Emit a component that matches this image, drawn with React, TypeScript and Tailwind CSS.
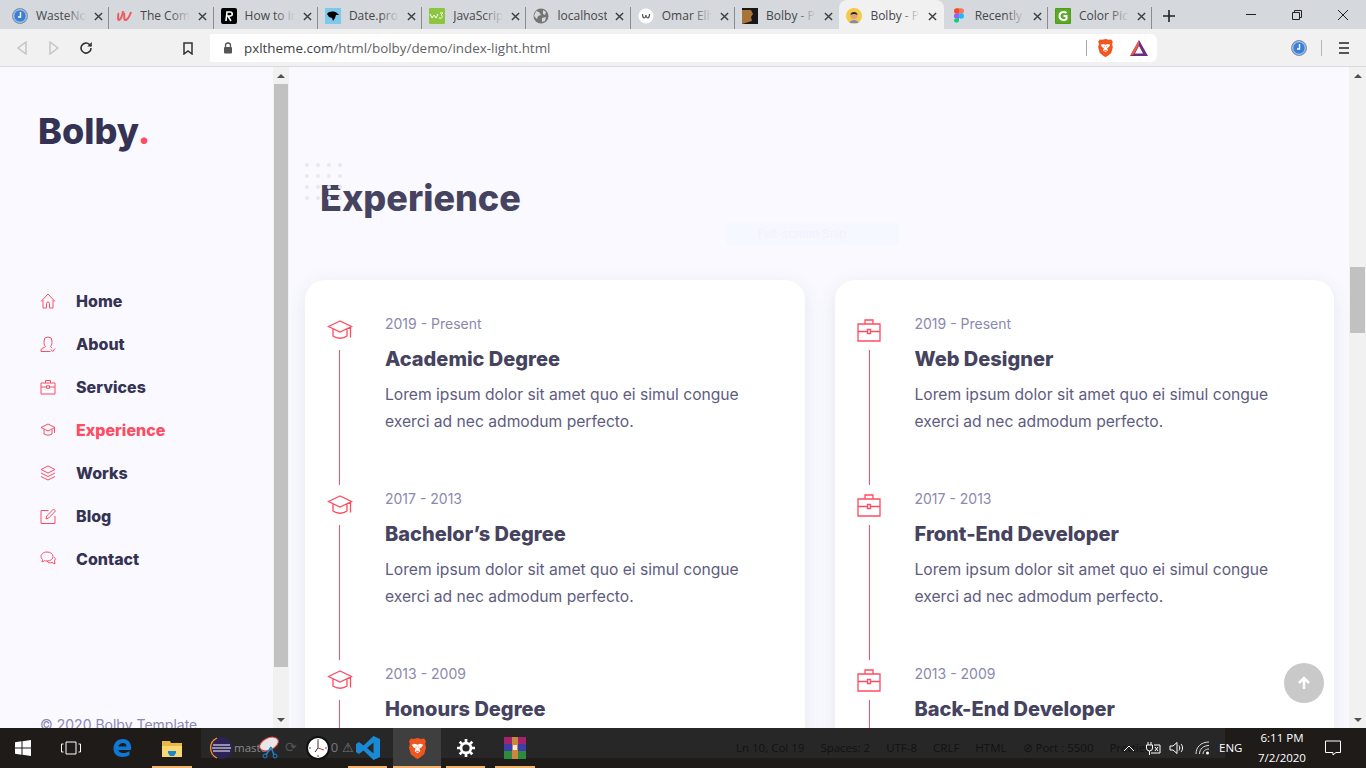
import React from "react";

const sans = "font-['Inter','Liberation_Sans',sans-serif]";
const ui = "font-['Open_Sans','Liberation_Sans',sans-serif]";

function Fav({ k }: { k: string }) {
  const c = "w-4 h-4 shrink-0";
  switch (k) {
    case "clock":
      return (
        <svg viewBox="0 0 16 16" className={c}>
          <circle cx="8" cy="8" r="7.500" fill="#3b7fd6" stroke="#8a93a0" />
          <circle cx="8" cy="8" r="6.300" fill="none" stroke="#fff" strokeWidth=".7" />
          <path d="M8.500 4v5H6" stroke="#fff" strokeWidth="1.400" fill="none" />
        </svg>
      );
    case "u":
      return (
        <svg viewBox="0 0 16 16" className={c}>
          <path d="M2 5c1 1-1 7 1 7s4-7 4-9M8 5c1 1-1 8 2 7 2-1 4-5 5-8" stroke="#ef5a5f" strokeWidth="2" fill="none" />
        </svg>
      );
    case "r":
      return (
        <svg viewBox="0 0 16 16" className={c}>
          <rect width="16" height="16" rx="2" fill="#000" />
          <path d="M5 13l1-9h3c3 0 3 4 0 4H7l3 5" stroke="#fff" strokeWidth="1.600" fill="none" />
        </svg>
      );
    case "bird":
      return (
        <svg viewBox="0 0 16 16" className={c}>
          <rect width="16" height="16" fill="#7ec8ec" />
          <path d="M2 6c2-3 7-3 10-1l2 2-3 0-1 3-2 3-1-3-3-1z" fill="#000" />
        </svg>
      );
    case "w3":
      return (
        <svg viewBox="0 0 16 16" className={c}>
          <rect width="16" height="16" rx="1" fill="#8cc63f" />
          <path d="M1 6l2 4 2-3 2 3 2-4M11 5h3l-2 2c2 0 2 4-2 3" stroke="#fff" strokeWidth="1" fill="none" />
        </svg>
      );
    case "globe":
      return (
        <svg viewBox="0 0 16 16" className={c}>
          <circle cx="8" cy="8" r="7.500" fill="#757575" />
          <path d="M3 3l3 1 2 3-3 1-1 3-3-3zM10 2l3 2-1 3-2-1zM9 10l4-1-1 4-3 1z" fill="#d5d8dc" />
        </svg>
      );
    case "w":
      return (
        <svg viewBox="0 0 16 16" className={c}>
          <circle cx="8" cy="8" r="7.500" fill="#fff" />
          <path d="M4.500 6c0 5 3 5 3.500 1 .5 4 3.500 4 3.500-1" stroke="#555" strokeWidth="1.200" fill="none" />
        </svg>
      );
    case "hair":
      return (
        <svg viewBox="0 0 16 16" className={c}>
          <rect width="16" height="16" fill="#171717" />
          <path d="M0 2h9l2 4-2 3 1 4-10 3z" fill="#a8743a" />
        </svg>
      );
    case "face":
      return (
        <svg viewBox="0 0 16 16" className={c}>
          <circle cx="8" cy="8" r="8" fill="#f5c94a" />
          <circle cx="8" cy="7.500" r="3.500" fill="#e0a37c" />
          <path d="M4.500 7c0-4 7-4 7 0-2-1.500-5-1.500-7 0z" fill="#26262e" />
          <path d="M3.500 15c1-4 8-4 9 0z" fill="#7b88c9" />
        </svg>
      );
    case "figma":
      return (
        <svg viewBox="0 0 16 16" className={c}>
          <path d="M3 3a2.700 2.700 0 012.700-2.700H8v5.400H5.700A2.700 2.700 0 013 3z" fill="#f24e1e" />
          <path d="M8 .3h2.300a2.700 2.700 0 010 5.400H8z" fill="#ff7262" />
          <path d="M3 8a2.700 2.700 0 012.700-2.700H8v5.400H5.700A2.700 2.700 0 013 8z" fill="#a259ff" />
          <circle cx="10.300" cy="8" r="2.700" fill="#1abcfe" />
          <path d="M3 13a2.700 2.700 0 012.700-2.700H8V13a2.700 2.700 0 01-5 0z" fill="#0acf83" />
        </svg>
      );
    default:
      return (
        <svg viewBox="0 0 16 16" className={c}>
          <rect width="16" height="16" rx="1" fill="#4f9a1f" />
          <rect x="1" y="1" width="14" height="14" fill="#5aa925" />
          <path d="M11.500 5C9 3 4.500 4 4.500 8s5 5 7 3V8H8.500" stroke="#fff" strokeWidth="2" fill="none" />
        </svg>
      );
  }
}

const tabs = [
  ["clock", "WasteNoTime"],
  ["u", "The Complete"],
  ["r", "How to install"],
  ["bird", "Date.prototype"],
  ["w3", "JavaScript Date"],
  ["globe", "localhost"],
  ["w", "Omar Elhawary"],
  ["hair", "Bolby - Portfolio"],
  ["face", "Bolby - Portfolio"],
  ["figma", "Recently viewed"],
  ["g", "Color Picker"],
];

function Tab({ k, t, active, sep }: { k: string; t: string; active: boolean; sep: boolean }) {
  return (
    <div className={`relative flex items-center w-[104.300px] h-[29px] pl-[7px] pr-[5px] pt-[3px] shrink-0 ${active ? "bg-[#f1f1f1] rounded-t-lg" : ""}`}>
      <Fav k={k} />
      <div className="relative ml-[8px] w-[50px] overflow-hidden whitespace-nowrap text-[12px] text-[#45474a]">
        {t}
        {t !== "localhost" && (
          <span className={`absolute right-0 top-0 bottom-0 w-5 bg-linear-to-r from-transparent ${active ? "to-[#f1f1f1]" : "to-[#d5d8dc]"}`} />
        )}
      </div>
      <svg viewBox="0 0 10 10" className="w-[9px] h-[9px] ml-[8px] shrink-0">
        <path d="M1 1l8 8M9 1l-8 8" stroke="#3c3f43" strokeWidth="1.600" />
      </svg>
      {sep && <span className="absolute right-0 top-[7px] bottom-0 w-px bg-[#8a8d90]" />}
    </div>
  );
}

function BraveIcon({ cls }: { cls: string }) {
  return (
    <svg viewBox="0 0 20 22" className={cls}>
      <path d="M10 0l4 1 3-.5 2 3-1 2.500 1 4-2 7-5 4-2 1-2-1-5-4-2-7 1-4-1-2.500 2-3 3 .5z" fill="#f1561f" />
      <path d="M4 7l3-1 3 1 3-1 3 1-2 3-2 1 1 3-3 2-3-2 1-3-2-1z" fill="#fff" />
      <path d="M8 9.500h1M11 9.500h1M8.500 14h3" stroke="#f1561f" strokeWidth="1" />
    </svg>
  );
}

function TopBar() {
  return (
    <div className={`shrink-0 ${ui}`}>
      <div className="h-[29px] bg-[#d5d8dc] flex items-center pl-[5px] relative">
        {tabs.map(([k, t], i) => (
          <Tab key={i} k={k} t={t} active={i === 8} sep={i !== 7 && i !== 8} />
        ))}
        <svg viewBox="0 0 12 12" className="w-3 h-3 ml-[11px] mt-[3px] shrink-0">
          <path d="M6 0v12M0 6h12" stroke="#222" strokeWidth="1.600" />
        </svg>
        <div className="flex items-center ml-auto">
          <div className="w-[46px] flex justify-center">
            <span className="w-[10px] h-px bg-[#222]" />
          </div>
          <div className="w-[46px] flex justify-center">
            <svg viewBox="0 0 10 10" className="w-[10px] h-[10px]">
              <path d="M.5 2.500h7v7h-7zM2.500 2.500v-2h7v7h-2" stroke="#222" fill="none" />
            </svg>
          </div>
          <div className="w-[46px] flex justify-center">
            <svg viewBox="0 0 10 10" className="w-[10px] h-[10px]">
              <path d="M0 0l10 10M10 0L0 10" stroke="#222" />
            </svg>
          </div>
        </div>
      </div>
      <div className="h-[38px] pt-[1px] bg-[#f1f1f1] border-b border-[#d9d9e0] flex items-center relative">
        <svg viewBox="0 0 12 14" className="w-3 h-[14px] ml-[16px]">
          <path d="M10 1L2 7l8 6z" stroke="#c3c3c3" strokeWidth="1.400" fill="none" />
        </svg>
        <svg viewBox="0 0 12 14" className="w-3 h-[14px] ml-[20px]">
          <path d="M2 1l8 6-8 6z" stroke="#c3c3c3" strokeWidth="1.400" fill="none" />
        </svg>
        <svg viewBox="0 0 14 14" className="w-[14px] h-[14px] ml-[19px]">
          <path d="M12 7a5 5 0 11-1.500-3.500L12 5" stroke="#333" strokeWidth="1.600" fill="none" />
          <path d="M12.800 1v4.500H8.300z" fill="#333" />
        </svg>
        <svg viewBox="0 0 10 13" className="w-[10px] h-[13px] ml-[90px]">
          <path d="M1 1h8v11L5 9l-4 3z" stroke="#333" strokeWidth="1.500" fill="none" />
        </svg>
        <div className="ml-[17px] w-[947px] h-[28px] bg-white rounded-r-md flex items-center">
          <svg viewBox="0 0 10 12" className="w-[10px] h-3 ml-[13px]">
            <path d="M2.500 5V3.500a2.500 2.500 0 015 0V5" stroke="#555" strokeWidth="1.300" fill="none" />
            <rect x="1" y="5" width="8" height="6.500" rx="1" fill="#555" />
          </svg>
          <span className="ml-[11px] text-[13.400px] text-[#5f6368] whitespace-nowrap">
            <span className="text-[#3c3f43]">pxltheme.com</span>/html/bolby/demo/index-light.html
          </span>
          <span className="ml-auto w-px h-4 bg-[#a8a8a8]" />
          <BraveIcon cls="w-[17px] h-[18px] ml-[10px]" />
          <svg viewBox="0 0 18 16" className="w-[18px] h-[16px] ml-[16px] mr-[9px]">
            <path d="M9 0L0 16h18z" fill="#6c2c85" />
            <path d="M9 0L0 16l4-2 5-9z" fill="#f15a3c" />
            <path d="M9 6l-4 7.500h8z" fill="#fff" />
          </svg>
        </div>
        <svg viewBox="0 0 16 16" className="w-4 h-4 ml-[134px]">
          <circle cx="8" cy="8" r="7.500" fill="#3b7fd6" stroke="#8a93a0" />
          <circle cx="8" cy="8" r="6.300" fill="none" stroke="#fff" strokeWidth=".7" />
          <path d="M8.500 4v5H6" stroke="#fff" strokeWidth="1.400" fill="none" />
        </svg>
        <span className="w-px h-4 bg-[#b5b5b5] ml-[14px]" />
        <div className="ml-[17px] flex flex-col gap-[3px]">
          <span className="w-[10px] h-[2px] bg-[#555]" />
          <span className="w-[10px] h-[2px] bg-[#555]" />
          <span className="w-[10px] h-[2px] bg-[#555]" />
        </div>
      </div>
    </div>
  );
}

const navIcon: Record<string, React.ReactNode> = {
  home: <path d="M1 8.500L8 1l7 7.500M3 7v8h3.500v-4.500a1.500 1.500 0 013 0V15H13V7" />,
  user: <path d="M1 15.500v-1.500c0-2 3.500-2 4.500-3.500C4 9 4 7 4 5a4 4 0 018 0c0 2 0 4-1.500 5.500.5.700 1 1 1.500 1.300M1 15.500h9.500M11 13.500l1.800 2 2.200-3" />,
  case: <path d="M1 4h14v11H1zM5.500 4V1.500h5V4M1 8h5.500M9.500 8H15M6.500 6.800h3v2.500h-3z" />,
  grad: <path d="M8 2L1 5.500 8 9l7-3.500zM4 7.500V12c2.500 1.500 5.500 1.500 8 0V7.500M14.500 6v5" />,
  layers: <path d="M8 1l7 3.500L8 8 1 4.500zM1 8l7 3.500L15 8M1 11.500L8 15l7-3.500" />,
  note: <path d="M8.500 2.500H1v13h14V8M6 11l.7-3L13.500 1l2 2-6.800 7z" />,
  bubbles: <path d="M7 1c3.500 0 6 2 6 4.500S10.500 10 7 10c-1 0-1.500 0-2.500-.3L2 11l.5-2.500C1.500 7.500 1 6.500 1 5.500 1 3 3.500 1 7 1zM14 6c1 .8 1.500 1.800 1 3l-.5 1 .5 3-3-1.500c-2 .7-4 .2-5-1.500" />,
};

function NavIcon({ k }: { k: string }) {
  return (
    <svg viewBox="0 0 16 16" className="w-4 h-4 shrink-0" fill="none" stroke="#ff4c60" strokeWidth="1">
      {navIcon[k]}
    </svg>
  );
}

const nav = [
  ["home", "Home"],
  ["user", "About"],
  ["case", "Services"],
  ["grad", "Experience"],
  ["layers", "Works"],
  ["note", "Blog"],
  ["bubbles", "Contact"],
];

function Arrow({ up }: { up: boolean }) {
  return (
    <div className="h-[17px] flex items-center justify-center shrink-0">
      <span className={`w-0 h-0 border-x-[4px] border-x-transparent ${up ? "border-b-[4px] border-b-[#505050]" : "border-t-[4px] border-t-[#505050]"}`} />
    </div>
  );
}

function Sidebar() {
  return (
    <>
      <aside className={`w-[273px] shrink-0 bg-[#f9f9ff] overflow-hidden ${sans}`}>
        <div className="pl-[38px] pt-[40px] text-[36px] font-extrabold leading-[48px] text-[#353353]">
          Bolby<span className="text-[#ff4c60]">.</span>
        </div>
        <ul className="mt-[124px] pl-[40px]">
          {nav.map(([k, t]) => (
            <li key={t} className="h-[43px] flex items-center gap-[20px]">
              <NavIcon k={k} />
              <span className={`text-[16px] font-extrabold ${t === "Experience" ? "text-[#ff4c60]" : "text-[#353353]"}`}>{t}</span>
            </li>
          ))}
        </ul>
        <p className="mt-[136px] pl-[40px] text-[14px] leading-[17px] text-[#8b88b1] whitespace-nowrap">© 2020 Bolby Template</p>
      </aside>
      <div className="w-[16px] shrink-0 bg-[#f1f1f1] flex flex-col">
        <Arrow up />
        <div className="mx-px h-[583px] bg-[#c1c1c1]" />
        <div className="flex-1" />
        <Arrow up={false} />
      </div>
    </>
  );
}

function Dots() {
  return (
    <div className="absolute left-0 top-0 grid grid-cols-4 gap-[7px]">
      {Array.from({ length: 16 }).map((_, i) => (
        <span key={i} className="w-1 h-1 rounded-full bg-[#e8e8f1]" />
      ))}
    </div>
  );
}

function TLIcon({ k }: { k: string }) {
  return (
    <svg viewBox="0 0 26 24" className="w-[26px] h-[24px] bg-white" fill="none" stroke="#ff4c60" strokeWidth="1.300">
      {k === "grad" ? (
        <path d="M13 3L1.500 8.500 13 14l11.500-5.500zM6 11v7c4 3 10 3 14 0v-7M23.500 9.500v8.500M23.500 18v1.500" />
      ) : (
        <path d="M2 6h22v17H2zM9 6V2h8v4M2 13.500h9.500M14.500 13.500H24M11.500 11.500h3v4h-3z" />
      )}
    </svg>
  );
}

const edu = [
  ["2019 - Present", "Academic Degree"],
  ["2017 - 2013", "Bachelor’s Degree"],
  ["2013 - 2009", "Honours Degree"],
];
const work = [
  ["2019 - Present", "Web Designer"],
  ["2017 - 2013", "Front-End Developer"],
  ["2013 - 2009", "Back-End Developer"],
];

function Card({ items, icon }: { items: string[][]; icon: string }) {
  return (
    <div className="bg-white rounded-[20px] shadow-[0_5px_20px_0_rgba(69,67,96,0.1)] pt-[30px] px-[22px]">
      {items.map(([d, t]) => (
        <div key={t} className="flex h-[175px]">
          <div className="w-[25px] shrink-0 flex flex-col items-center">
            <div className="mt-[8px] mb-[8px]">
              <TLIcon k={icon} />
            </div>
            <div className="w-px flex-1 bg-[#ff4c60]" />
          </div>
          <div className="ml-[33px]">
            <div className="text-[14px] leading-[28px] text-[#8b88b1]">{d}</div>
            <h3 className="mt-[7px] text-[20px] leading-[28px] font-extrabold text-[#454360]">{t}</h3>
            <p className="mt-[8px] text-[15.650px] leading-[27px] text-[#5e5c7f] w-[380px]">
              Lorem ipsum dolor sit amet quo ei simul congue exerci ad nec admodum perfecto.
            </p>
          </div>
        </div>
      ))}
    </div>
  );
}

function Main() {
  return (
    <main className={`relative flex-1 min-w-0 bg-[#f9f9ff] overflow-hidden pl-[16px] pr-[15px] ${sans}`}>
      <div className="relative mt-[96px] h-[117px]">
        <Dots />
        <h2 className="pl-[15px] pt-[13px] text-[36px] leading-[44px] font-extrabold text-[#454360]">Experience</h2>
      </div>
      <div className="grid grid-cols-2 gap-[30px]">
        <Card items={edu} icon="grad" />
        <Card items={work} icon="case" />
      </div>
      <div className="absolute left-[437px] top-[156px] w-[173px] h-[22px] bg-[#f6f8ff] pl-[32px] text-[11.500px] leading-[22px] text-[#f1f2fb]">Full-screen Snip</div>
      <div className="absolute right-[25px] top-[596px] w-10 h-10 rounded-full bg-[#c9c9c9] flex items-center justify-center">
        <svg viewBox="0 0 14 14" className="w-[14px] h-[14px]">
          <path d="M7 13V2M2 7l5-5 5 5" stroke="#fff" strokeWidth="2.500" fill="none" />
        </svg>
      </div>
    </main>
  );
}

function PageScroll() {
  return (
    <div className="w-[17px] shrink-0 bg-[#f1f1f1] flex flex-col">
      <Arrow up />
      <div className="mt-[183px] mx-px h-[66px] bg-[#c1c1c1]" />
      <div className="flex-1" />
      <Arrow up={false} />
    </div>
  );
}

function TB({ children, w, line, active }: { children: React.ReactNode; w: string; line?: boolean; active?: boolean }) {
  return (
    <div className={`relative h-10 flex items-center justify-center shrink-0 ${w} ${active ? "bg-[#3f3f3f]" : ""}`}>
      {children}
      {line && <span className="absolute bottom-0 left-0 right-0 h-[2px] bg-[#f2b36b]" />}
    </div>
  );
}

function StatusBand() {
  return (
    <div className="absolute left-[201px] top-0 w-[1024px] h-[30px] bg-[#272727] text-[11.500px] whitespace-nowrap flex pt-[11px]">
      <span className="ml-[33px] text-[#8a8a8a]">master</span>
      <span className="ml-[13px] text-[#555] text-[14px] leading-[16px]">⟳</span>
      <span className="ml-[34px] text-[#777] text-[13px] leading-[16px]">0 ⚠</span>
      <div className="absolute left-[535px] top-[11px] flex gap-[16px] text-[#121212]">
        <span>Ln 10, Col 19</span>
        <span>Spaces: 2</span>
        <span>UTF-8</span>
        <span>CRLF</span>
        <span>HTML</span>
        <span>⊘ Port : 5500</span>
        <span>Prettier</span>
      </div>
    </div>
  );
}

function Taskbar() {
  return (
    <div className={`relative h-10 shrink-0 bg-[#1e1b19] flex items-center ${ui}`}>
      <StatusBand />
      <TB w="w-[46px]">
        <svg viewBox="0 0 16 16" className="w-4 h-4">
          <path d="M0 2.300l6.500-1v6.200H0zM7.500 1.200L16 0v7.500H7.500zM0 8.500h6.500v6.200l-6.500-1zM7.500 8.500H16V16l-8.500-1.200z" fill="#fff" />
        </svg>
      </TB>
      <TB w="w-[50px]">
        <svg viewBox="0 0 20 14" className="w-5 h-[14px]">
          <path d="M5 1h10v12H5zM2.500 3H.5v8h2M17.500 3h2v8h-2" stroke="#fff" fill="none" />
        </svg>
      </TB>
      <TB w="w-[54px]">
        <svg viewBox="0 0 20 20" className="w-5 h-5">
          <path d="M10 1C4 1 .5 5 .5 11c0 5 4 8 9 8 3 0 5.500-.8 7-2v-4c-2 1.500-4 2-6.500 2s-4.500-1-4.500-3h12.500c1-6-2-11-8-11zM5.500 8.500C6 6 8 5 10 5s3.500 1 3.500 3.500z" fill="#0f78d4" />
        </svg>
      </TB>
      <TB w="w-[40px] ml-[2px]" line>
        <svg viewBox="0 0 22 20" className="w-[22px] h-5">
          <path d="M1 3h8l1 2h11v4H1z" fill="#e8b745" />
          <path d="M1 8h20v11H1z" fill="#f8d775" />
          <path d="M7 13h8v2l-2 3H9l-2-3z" fill="#1a86d0" />
        </svg>
      </TB>
      <TB w="w-[58px]">
        <svg viewBox="0 0 24 24" className="w-[24px] h-[24px]">
          <circle cx="12.500" cy="12" r="11" fill="#2c2255" />
          <path d="M8 2A11 11 0 008 22" stroke="#f79421" strokeWidth="1.300" fill="none" />
          <path d="M4 9h17M3 12h19M4 15h17" stroke="#fff" strokeWidth="1.200" />
        </svg>
      </TB>
      <TB w="w-[38px]">
        <svg viewBox="0 0 24 24" className="w-6 h-6">
          <ellipse cx="12" cy="8" rx="10" ry="6" transform="rotate(-25 12 8)" fill="#e8e6e6" stroke="#d23f3f" />
          <path d="M14 11l-5 8M14 11l3 8" stroke="#1a86d0" strokeWidth="1.500" />
          <circle cx="8" cy="20" r="2" fill="none" stroke="#1a86d0" />
          <circle cx="18" cy="20" r="2" fill="none" stroke="#1a86d0" />
        </svg>
      </TB>
      <TB w="w-[60px]">
        <svg viewBox="0 0 24 24" className="w-6 h-6">
          <circle cx="12" cy="12" r="11" fill="#fff" stroke="#111" strokeWidth="2" />
          <path d="M12 3v2M12 19v2M3 12h2M19 12h2" stroke="#555" />
          <path d="M12 5v7l-3 4" stroke="#333" strokeWidth="1" fill="none" />
          <path d="M12 12l6 2" stroke="#d23f3f" />
        </svg>
      </TB>
      <TB w="w-[39px]" line>
        <svg viewBox="0 0 24 24" className="w-[24px] h-[24px]">
          <path d="M17.500 0L24 3v18l-6.500 3-10-9.500-4.500 3.500L0 16V8l3-2 4.500 3.500zM17.500 6.500L11 12l6.500 5.500z" fill="#1a8ad4" />
        </svg>
      </TB>
      <TB w="w-[48px] ml-[6px]" line active>
        <BraveIcon cls="w-[19px] h-[21px]" />
      </TB>
      <TB w="w-[39px] ml-[5px]" line>
        <svg viewBox="0 0 20 20" className="w-[18px] h-[18px]">
          <circle cx="10" cy="10" r="5.500" stroke="#fff" strokeWidth="3" fill="none" />
          <path d="M10 0v4M10 16v4M0 10h4M16 10h4M3 3l3 3M14 14l3 3M17 3l-3 3M6 14l-3 3" stroke="#fff" strokeWidth="3" />
        </svg>
      </TB>
      <TB w="w-[40px] ml-[10px]" line>
        <svg viewBox="0 0 24 24" className="w-6 h-6">
          <rect x="1" y="1" width="22" height="7" fill="#a3246d" />
          <rect x="1" y="8" width="22" height="7" fill="#3d3fa6" />
          <rect x="1" y="15" width="22" height="8" fill="#2e8b3c" />
          <rect x="9" y="1" width="6" height="22" fill="#c9873f" />
          <rect x="10" y="9" width="4" height="5" fill="#eee" />
        </svg>
      </TB>
      <div className="relative ml-auto flex items-center text-white">
        <svg viewBox="0 0 12 8" className="w-[12px] h-2">
          <path d="M1 7l5-5 5 5" stroke="#fff" fill="none" />
        </svg>
        <svg viewBox="0 0 16 14" className="w-4 h-[14px] ml-[10px]">
          <path d="M3 1v3M6 1v3M1.500 4h6v3a3 3 0 01-6 0zM4.500 10v4M9 4h6v8H6" stroke="#fff" fill="none" />
          <path d="M10 6l3 4M13 6l-3 4" stroke="#fff" />
        </svg>
        <svg viewBox="0 0 16 14" className="w-4 h-[14px] ml-[8px]">
          <path d="M1 5h3l4-3.500v11L4 9H1zM10 4.500c1 1.500 1 3.500 0 5M12 3c2 2 2 6 0 8" stroke="#fff" fill="none" />
        </svg>
        <svg viewBox="0 0 16 14" className="w-4 h-[14px] ml-[10px]">
          <path d="M1 13C1 6 6 1 14 1M4.500 13c0-5 4-8.500 9.500-8.500M8 13c0-3 2.500-5 6-5" stroke="#ddd" fill="none" />
          <circle cx="12.500" cy="12" r="1.500" fill="#fff" />
        </svg>
        <span className="ml-[8px] w-[26px] text-[11.500px]">ENG</span>
        <div className="ml-[6px] w-[62px] text-[11.500px] leading-[20px] text-center">
          <div>6:11 PM</div>
          <div>7/2/2020</div>
        </div>
        <svg viewBox="0 0 16 16" className="w-4 h-4 ml-[12px] mr-[25px]">
          <path d="M.5 1h15v11.500h-4.500l-3 2.500v-2.500H.5z" stroke="#fff" fill="none" />
        </svg>
      </div>
    </div>
  );
}

export default function App() {
  return (
    <div className="h-screen w-full overflow-hidden flex flex-col bg-[#f9f9ff]">
      <TopBar />
      <div className="flex-1 min-h-0 flex">
        <Sidebar />
        <Main />
        <PageScroll />
      </div>
      <Taskbar />
    </div>
  );
}
